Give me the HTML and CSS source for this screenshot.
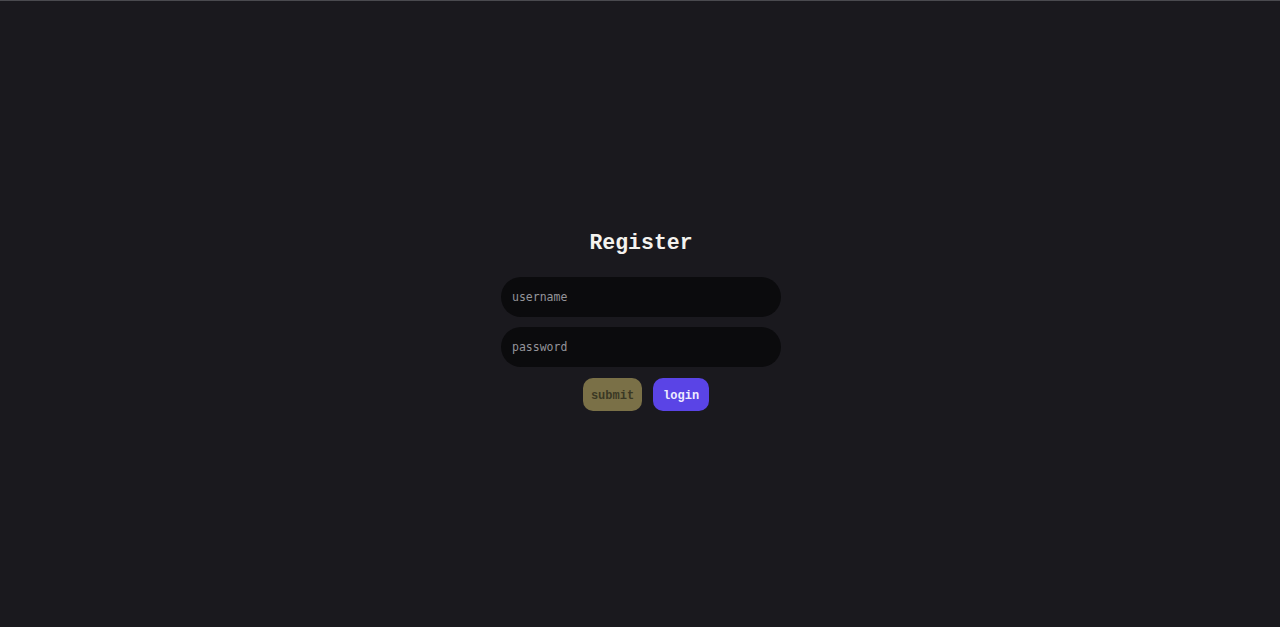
FILE: index.html
```html
<!DOCTYPE html>
<html lang="en">
<head>
<meta charset="utf-8">
<title>Register</title>
<link rel="stylesheet" href="styles.css">
</head>
<body>
<main class="page">
  <form class="register">
    <h1 class="title">Register</h1>
    <input class="field" type="text" placeholder="username">
    <input class="field" type="password" placeholder="password">
    <div class="actions">
      <button class="btn btn-submit" type="button">submit</button>
      <button class="btn btn-login" type="button">login</button>
    </div>
  </form>
</main>
</body>
</html>
```
FILE: styles.css
```css
html, body {
  margin: 0;
  padding: 0;
  background: #1a191e;
}
body {
  height: 627px;
  box-sizing: border-box;
  border-top: 1px solid #4a4a4f;
  font-family: "Liberation Mono", "DejaVu Sans Mono", monospace;
}
.page {
  display: flex;
  justify-content: center;
  padding-top: 229px;
  padding-left: 2px;
}
.register {
  display: flex;
  flex-direction: column;
  align-items: center;
  width: 280px;
}
.title {
  margin: 0 0 21px;
  font-size: 21.5px;
  line-height: 26px;
  font-weight: 700;
  color: #f4f2ee;
  font-family: "Liberation Mono", monospace;
}
.field {
  box-sizing: border-box;
  width: 280px;
  height: 40px;
  margin: 0 0 10px;
  padding: 0 11px;
  border: none;
  outline: none;
  border-radius: 20px;
  background: #0b0b0d;
  color: #cfcfd4;
  font-family: "DejaVu Sans Mono", monospace;
  font-size: 11.5px;
}
.field::placeholder {
  color: #94949a;
}
.actions {
  display: flex;
  gap: 11px;
  margin-top: 1px;
  padding-left: 10px;
}
.btn {
  box-sizing: border-box;
  height: 33px;
  padding-top: 3px;
  border: none;
  border-radius: 10px;
  font-family: "Liberation Mono", monospace;
  font-size: 12px;
  font-weight: 700;
  cursor: pointer;
}
.btn-submit {
  padding-left: 8px;
  padding-right: 8px;
  background: #7a7047;
  color: #3a3824;
}
.btn-login {
  padding-left: 10px;
  padding-right: 10px;
  background: #5a44e6;
  color: #eeebff;
}
```
